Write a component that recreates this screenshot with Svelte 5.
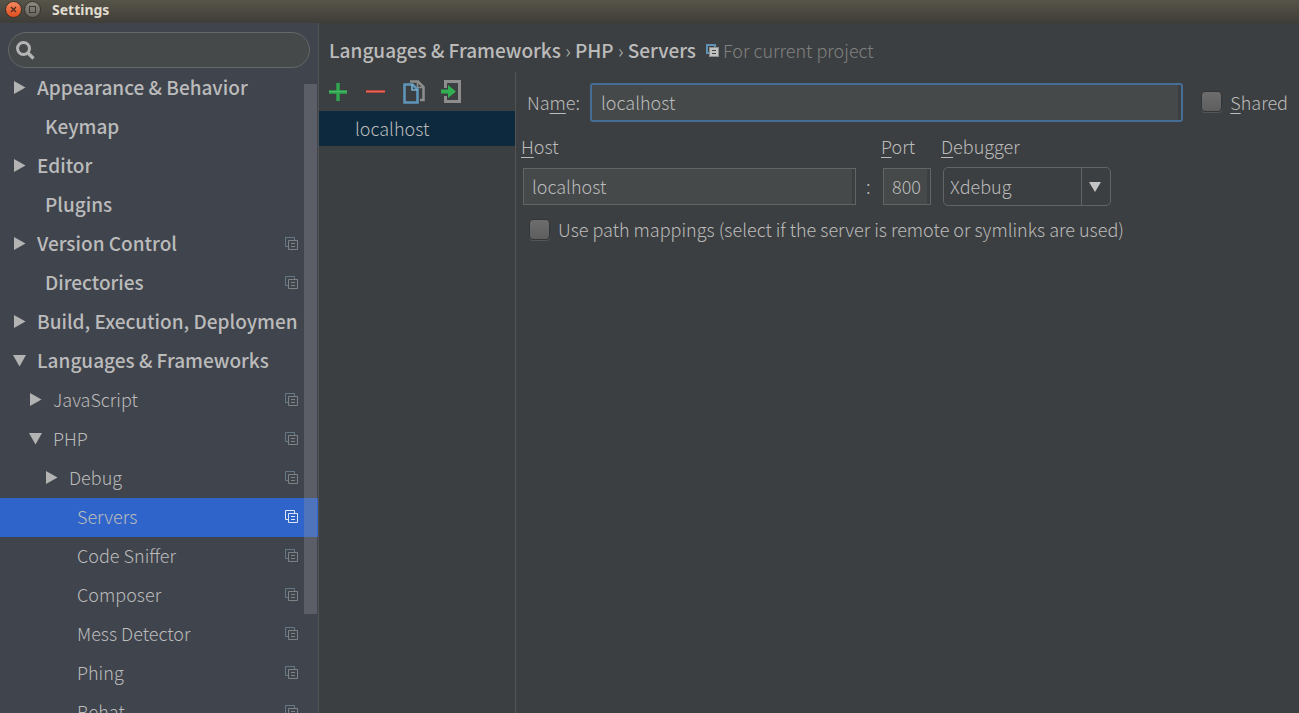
<script>
  let query = $state('');
  let selected = $state('Servers');
  let name = $state('localhost');
  let host = $state('localhost');
  let port = $state('8000');
  let shared = $state(false);
  let mappings = $state(false);

  const tree = [
    { label: 'Appearance & Behavior', level: 0, arrow: 'right' },
    { label: 'Keymap', level: 0 },
    { label: 'Editor', level: 0, arrow: 'right' },
    { label: 'Plugins', level: 0 },
    { label: 'Version Control', level: 0, arrow: 'right', project: true },
    { label: 'Directories', level: 0, project: true },
    { label: 'Build, Execution, Deployment', level: 0, arrow: 'right' },
    { label: 'Languages & Frameworks', level: 0, arrow: 'down' },
    { label: 'JavaScript', level: 1, arrow: 'right', project: true },
    { label: 'PHP', level: 1, arrow: 'down', project: true },
    { label: 'Debug', level: 2, arrow: 'right', project: true },
    { label: 'Servers', level: 2, project: true },
    { label: 'Code Sniffer', level: 2, project: true },
    { label: 'Composer', level: 2, project: true },
    { label: 'Mess Detector', level: 2, project: true },
    { label: 'Phing', level: 2, project: true },
    { label: 'Behat', level: 2, project: true }
  ];
</script>

<div class="window">
  <header class="titlebar">
    <button class="win close" aria-label="Close">
      <svg width="17" height="17" viewBox="0 0 17 17">
        <defs>
          <linearGradient id="orange" x1="0" y1="0" x2="0" y2="1">
            <stop offset="0" stop-color="#f58a63" /><stop offset="1" stop-color="#df4d1b" />
          </linearGradient>
        </defs>
        <circle cx="8.5" cy="8.5" r="8" fill="url(#orange)" stroke="#33312c" />
        <path d="M6 6l5 5M11 6l-5 5" stroke="#4c2a1c" stroke-width="1.3" />
      </svg>
    </button>
    <button class="win" aria-label="Maximize">
      <svg width="17" height="17" viewBox="0 0 17 17">
        <defs>
          <linearGradient id="grey" x1="0" y1="0" x2="0" y2="1">
            <stop offset="0" stop-color="#8d8a81" /><stop offset="1" stop-color="#64625b" />
          </linearGradient>
        </defs>
        <circle cx="8.5" cy="8.5" r="8" fill="url(#grey)" stroke="#33312c" />
        <rect x="5.5" y="5.5" width="6" height="6" fill="none" stroke="#3b3a35" />
      </svg>
    </button>
    <h1>Settings</h1>
  </header>

  <div class="body">
    <aside>
      <label class="search">
        <svg width="20" height="20" viewBox="0 0 20 20" aria-hidden="true">
          <circle cx="7.5" cy="8.500" r="6" fill="none" stroke="#b4b4b4" stroke-width="3" />
          <path d="M11.5 12.5l6 6" stroke="#b4b4b4" stroke-width="3.4" />
        </svg>
        <input type="search" aria-label="Search settings" bind:value={query} />
      </label>
      <nav>
        {#each tree as item}
          <button
            class="node level{item.level}"
            class:leaf={!item.arrow}
            class:selected={selected === item.label}
            onclick={() => (selected = item.label)}
          >
            {#if item.arrow === 'right'}
              <svg class="arrow" width="13" height="13" viewBox="0 0 13 13"><path d="M1 0v13L12.5 6.5z" fill="#b3b3b3" /></svg>
            {:else if item.arrow === 'down'}
              <svg class="arrow" width="13" height="13" viewBox="0 0 13 13"><path d="M0 1h13L6.500 12.500z" fill="#b3b3b3" /></svg>
            {/if}
            <span class="text">{item.label}</span>
            {#if item.project}
              <svg class="scope" width="13" height="13" viewBox="0 0 13 13">
                <path class="back" d="M3 9.500H.5V.5h9V3" fill="none" />
                <path class="front" d="M3.500 3.500h9v9h-9zM6 6.500h4M6 9.500h4" fill="none" />
              </svg>
            {/if}
          </button>
        {/each}
      </nav>
      <div class="thumb"></div>
    </aside>

    <main>
      <div class="crumbs">
        <h2>Languages &amp; Frameworks <span>›</span> PHP <span>›</span> Servers</h2>
        <svg width="13" height="13" viewBox="0 0 13 13" aria-hidden="true">
          <path d="M3 9H1V1h8v2" fill="none" stroke="#5f92b3" stroke-width="2" />
          <rect x="3" y="3" width="10" height="10" fill="#8e8e8e" />
          <rect x="4" y="4" width="8" height="8" fill="#c0c2c2" />
          <path d="M6 6.500h4M6 9.500h4" stroke="#444" />
        </svg>
        <span class="hint">For current project</span>
      </div>

      <div class="panes">
        <section class="servers">
          <div class="tools">
            <button aria-label="Add">
              <svg width="22" height="24" viewBox="0 0 22 24"><path d="M2 12h18M11 3v18" stroke="#2fa84f" stroke-width="3.400" /><path d="M2 11.500h18" stroke="#48bb68" /></svg>
            </button>
            <button aria-label="Remove">
              <svg width="22" height="24" viewBox="0 0 22 24"><path d="M1 11.500h19" stroke="#b5443a" stroke-width="3" /><path d="M1 11.500h19" stroke="#e56a5c" /></svg>
            </button>
            <button aria-label="Copy">
              <svg width="22" height="24" viewBox="0 0 22 24">
                <path d="M7 1.500h8l5.500 5.500v13H17" fill="none" stroke="#8c8c8c" stroke-width="2.600" />
                <path d="M14.500 1v6.500H21" fill="none" stroke="#8c8c8c" stroke-width="1.600" />
                <path d="M1.500 4.500h8l5 5v13h-13z" fill="#3c3f41" stroke="#5e95b8" stroke-width="2.600" />
                <path d="M9 4v6h6" fill="none" stroke="#78afcf" stroke-width="1.600" />
              </svg>
            </button>
            <button aria-label="Import">
              <svg width="22" height="24" viewBox="0 0 22 24">
                <path d="M4.500 8V1.500h14v20h-14V16" fill="none" stroke="#8d8d8d" stroke-width="3" />
                <path d="M0 9.500h7V5l8 6.500-8 6.500v-4.500H0z" fill="#31ad52" />
              </svg>
            </button>
          </div>
          <ul><li><button class="server">localhost</button></li></ul>
        </section>

        <form onsubmit={(e) => e.preventDefault()}>
          <div class="name-row">
            <label for="name">Na<u>m</u>e:</label>
            <input id="name" class="field focus" type="text" bind:value={name} />
            <label class="check"><input type="checkbox" bind:checked={shared} /><span><u>S</u>hared</span></label>
          </div>
          <div class="address">
            <label for="host"><u>H</u>ost</label>
            <span></span>
            <label for="port"><u>P</u>ort</label>
            <label for="debugger"><u>D</u>ebugger</label>
            <input id="host" class="field" type="text" bind:value={host} />
            <span class="colon">:</span>
            <input id="port" class="field" type="text" bind:value={port} />
            <div class="combo">
              <select id="debugger"><option>Xdebug</option><option>Zend Debugger</option></select>
              <svg width="12" height="10" viewBox="0 0 12 10" aria-hidden="true"><path d="M0 0h12L6 10z" fill="#c4c4c4" /></svg>
            </div>
          </div>
          <label class="check mappings">
            <input type="checkbox" bind:checked={mappings} />
            <span>Use path mappings (select if the server is remote or symlinks are used)</span>
          </label>
        </form>
      </div>
    </main>
  </div>
</div>

<style>
  :global(body) { margin: 0; overflow: hidden; }
  .window {
    display: flex;
    flex-direction: column;
    height: 100vh;
    background: #3c3f41;
    color: #bbb;
    font: 300 18px/26px "Noto Sans CJK SC", sans-serif;
  }
  button, input, select { font: inherit; color: inherit; box-sizing: border-box; }
  button { background: none; border: 0; padding: 0; margin: 0; text-align: left; }
  input, select { margin: 0; outline: 0; min-width: 0; }
  svg { display: block; flex: none; }
  label, .text, .hint, .colon { padding-bottom: 2px; }
  u { text-underline-offset: 3px; text-decoration-thickness: 1px; }

  .titlebar {
    display: flex;
    align-items: center;
    gap: 2px;
    flex: none;
    height: 23px;
    padding: 0 5px 4px;
    box-sizing: border-box;
    background: linear-gradient(#575449, #3e3d38);
  }
  h1 { margin: 0 0 0 9px; font: 700 14px/18px "Noto Sans", sans-serif; color: #e0dcd0; }

  .body { display: flex; flex: 1; min-height: 0; }
  aside {
    position: relative;
    display: flex;
    flex-direction: column;
    flex: none;
    width: 318px;
    border-right: 1px solid #515355;
    background: #40444d;
  }
  .search {
    display: flex;
    align-items: center;
    flex: none;
    gap: 8px;
    height: 36px;
    margin: 9px 8px 1px;
    padding: 0 7px;
    box-sizing: border-box;
    border: 1px solid #656868;
    border-radius: 18px;
    background: #45494a;
  }
  .search input { flex: 1; background: none; border: 0; appearance: none; }
  nav { flex: 1; min-height: 0; overflow: hidden; }
  .node {
    display: flex;
    align-items: center;
    width: 100%;
    height: 39px;
    padding: 0 20px 2px 13px;
  }
  .node .text { flex: 1; margin-left: 11px; overflow: hidden; white-space: nowrap; }
  .leaf .text { margin-left: 0; }
  .level0 { font-size: 19px; font-weight: 500; }
  .level0.leaf { padding-left: 45px; }
  .level1 { padding-left: 29px; }
  .level2 { padding-left: 45px; }
  .level2.leaf { padding-left: 77px; }
  .selected { background: #2f65ca; }
  .scope .back { stroke: #647886; }
  .scope .front { stroke: #7f8284; }
  .selected .scope path { stroke: #dce6f2; }
  .thumb {
    position: absolute;
    top: 61px;
    right: 1px;
    width: 13px;
    height: 530px;
    background: rgba(150, 150, 155, 0.32);
  }

  main { display: flex; flex-direction: column; flex: 1; min-width: 0; }
  .crumbs { display: flex; align-items: center; height: 43px; padding: 6px 10px 0; }
  h2 { margin: 0 10px 0 0; padding-bottom: 2px; font: inherit; font-size: 19px; font-weight: 500; }
  h2 span { font-weight: 300; }
  .hint { margin-left: 4px; color: #808080; }
  .panes { display: flex; flex: 1; min-height: 0; }
  .servers { flex: none; width: 196px; border-right: 1px solid #515355; }
  .tools { display: flex; align-items: center; gap: 16px; height: 39px; padding-left: 8px; }
  ul { margin: 0; padding: 0; list-style: none; }
  .server { display: block; width: 100%; height: 35px; padding: 0 0 2px 36px; background: #0d293e; }

  form { flex: 1; min-width: 0; padding: 11px 11px 0 5px; }
  .name-row { display: flex; align-items: center; padding-left: 6px; }
  .name-row .field { flex: 1; height: 39px; margin: 0 18px 0 10px; }
  .field {
    height: 37px;
    padding: 0 9px 2px 8px;
    border: 1px solid #646464;
    background: linear-gradient(#3c3f41, #3c3f41) right / 3px 100% no-repeat #45494a;
  }
  .focus { border: 2px solid #466d94; border-radius: 3px; padding-left: 9px; }
  .check { display: flex; align-items: center; gap: 8px; }
  input[type='checkbox'] {
    flex: none;
    appearance: none;
    width: 21px;
    height: 21px;
    border: 1px solid #333638;
    border-radius: 4px;
    background: linear-gradient(#6d6d6d, #5e5e5e);
    box-shadow: 0 1px 0 #545658;
  }
  input[type='checkbox']:checked { background: #8b8b8b; }
  .address {
    display: grid;
    grid-template-columns: 335px 25px 60px 170px;
    align-items: center;
    margin-top: 11px;
    row-gap: 6px;
  }
  .address .field { margin-left: 2px; }
  #port { margin-right: 10px; }
  .colon { padding-left: 10px; }
  .combo { display: grid; margin-left: 2px; align-items: center; }
  .combo select, .combo svg { grid-area: 1 / 1; }
  .combo svg { justify-self: end; margin-right: 10px; pointer-events: none; }
  select {
    appearance: none;
    width: 100%;
    height: 39px;
    padding: 0 30px 2px 6px;
    border: 1px solid #646464;
    border-radius: 5px;
    background: linear-gradient(#646464, #646464) right 28px top / 1px 100% no-repeat #3c3f41;
  }
  .mappings { margin: 10px 0 0 8px; }
</style>
